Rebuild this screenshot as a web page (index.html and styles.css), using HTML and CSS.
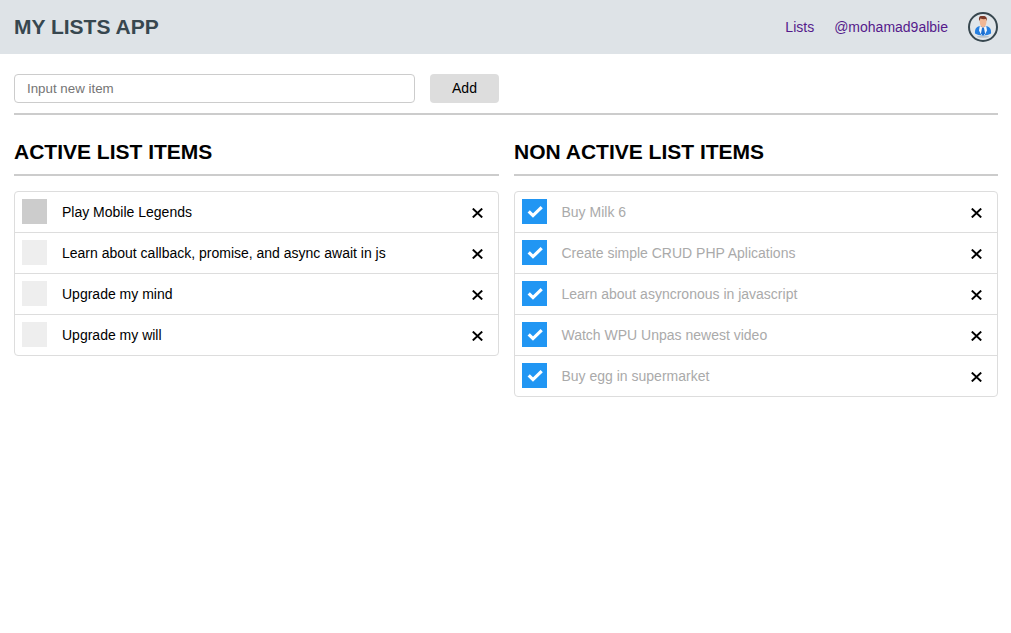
FILE: index.html
```html
<!DOCTYPE html>
<html lang="en">
<head>
<meta charset="utf-8">
<title>My Lists App</title>
<link rel="stylesheet" href="styles.css">
</head>
<body>
<svg class="symbols" width="0" height="0">
  <symbol id="cross" viewBox="0 0 11 10"><path d="M.8.600 10.200 9.400M10.200.600.8 9.400" fill="none" stroke="#000" stroke-width="2"/></symbol>
  <symbol id="check" viewBox="0 0 25 25"><path d="M6.700 12.300 11 16.600 19.700 8.100" fill="none" stroke="#fff" stroke-width="3.200"/></symbol>
</svg>
<header class="header">
  <h1 class="brand">MY LISTS APP</h1>
  <nav class="nav">
    <a class="link" href="#">Lists</a>
    <a class="link user" href="#">@mohamad9albie</a>
    <svg class="avatar" viewBox="0 0 30 30">
      <circle cx="15" cy="15" r="14" fill="#e1e6ea" stroke="#37474f" stroke-width="2"/>
      <ellipse cx="15" cy="24.800" rx="6" ry="1" fill="#b9c3cc"/>
      <path d="M7 21.500c-.3-4.500 1-6.500 4.500-7.500h7c3.500 1 4.800 3 4.500 7.500-3.500 2.600-12.500 2.600-16 0z" fill="#267fe0"/>
      <path d="M11.800 13.800 15 16l3.200-2.200.8 4.700-2.300 4.500h-3.400L11 18.500z" fill="#f4f8fc"/>
      <path d="M14 16h2l1 5.500-1.300 1.800h-1.400L13 21.500z" fill="#1c6fd0"/>
      <path d="M11.700 6.500h6.800c.4 4.500-.9 9-3.400 9s-3.800-4.500-3.400-9z" fill="#f0b795"/>
      <path d="M11.500 9C10.300 6 11.200 3.800 14 4.100c3.700-.5 5.500 1.200 4.700 4.900l-.8-2c-2 .3-4 .1-5.500-.4z" fill="#7b3a29"/>
    </svg>
  </nav>
</header>
<main class="main">
  <form class="form">
    <input class="input" type="text" placeholder="Input new item">
    <button class="add" type="button">Add</button>
  </form>
  <div class="columns">
    <section>
      <h2 class="heading">ACTIVE LIST ITEMS</h2>
      <ul class="list">
        <li class="item"><span class="box hover"></span><span class="label">Play Mobile Legends</span><svg class="cross"><use href="#cross"/></svg></li>
        <li class="item"><span class="box"></span><span class="label">Learn about callback, promise, and async await in js</span><svg class="cross"><use href="#cross"/></svg></li>
        <li class="item"><span class="box"></span><span class="label">Upgrade my mind</span><svg class="cross"><use href="#cross"/></svg></li>
        <li class="item"><span class="box"></span><span class="label">Upgrade my will</span><svg class="cross"><use href="#cross"/></svg></li>
      </ul>
    </section>
    <section>
      <h2 class="heading">NON ACTIVE LIST ITEMS</h2>
      <ul class="list done">
        <li class="item"><svg class="box"><use href="#check"/></svg><span class="label">Buy Milk 6</span><svg class="cross"><use href="#cross"/></svg></li>
        <li class="item"><svg class="box"><use href="#check"/></svg><span class="label">Create simple CRUD PHP Aplications</span><svg class="cross"><use href="#cross"/></svg></li>
        <li class="item"><svg class="box"><use href="#check"/></svg><span class="label">Learn about asyncronous in javascript</span><svg class="cross"><use href="#cross"/></svg></li>
        <li class="item"><svg class="box"><use href="#check"/></svg><span class="label">Watch WPU Unpas newest video</span><svg class="cross"><use href="#cross"/></svg></li>
        <li class="item"><svg class="box"><use href="#check"/></svg><span class="label">Buy egg in supermarket</span><svg class="cross"><use href="#cross"/></svg></li>
      </ul>
    </section>
  </div>
</main>
</body>
</html>
```
FILE: styles.css
```css
* { box-sizing: border-box; }
body {
  margin: 0;
  background: #fff;
  color: #000;
  font: 14px/20px "Liberation Sans", Arial, sans-serif;
}
.symbols { display: none; }
.header {
  display: flex;
  align-items: center;
  justify-content: space-between;
  height: 54px;
  padding: 0 13px 0 14px;
  background: #dee3e7;
}
.brand {
  margin: 0;
  color: #37474f;
  font-size: 21px;
  line-height: 24px;
}
.nav { display: flex; align-items: center; gap: 20px; }
.link { color: #551a8b; text-decoration: none; }
.avatar { width: 30px; height: 30px; }
.main { padding: 20px 13px 0 14px; }
.form {
  display: flex;
  gap: 15px;
  padding-bottom: 10px;
  border-bottom: 2px solid #ccc;
}
.input {
  width: 401px;
  height: 29px;
  padding: 0 12px;
  border: 1px solid #ccc;
  border-radius: 4px;
  font: 13.333px "Liberation Sans", Arial, sans-serif;
}
.input::placeholder { color: #757575; }
.add {
  width: 69px;
  height: 29px;
  padding: 0 0 1px;
  border: 0;
  border-radius: 4px;
  background: #ddd;
  color: #000;
  font: 14px "Liberation Sans", Arial, sans-serif;
}
.columns {
  display: grid;
  grid-template-columns: 485px 484px;
  gap: 15px;
  align-items: start;
}
.heading {
  height: 61px;
  margin: 0 0 15px;
  padding-top: 25px;
  border-bottom: 2px solid #ccc;
  font-size: 21px;
  line-height: 24px;
}
.done { color: #aaa; }
.list {
  margin: 0;
  padding: 0;
  border: 1px solid #ddd;
  border-radius: 4px;
  list-style: none;
}
.item {
  display: flex;
  align-items: center;
  height: 41px;
  padding: 0 15px 0 7px;
  border-bottom: 1px solid #ddd;
}
.item:last-child { height: 40px; border-bottom: 0; }
.box { flex: none; align-self: flex-start; width: 25px; height: 25px; margin-top: 7px; background: #eee; }
.box.hover { background: #ccc; }
.done .box { background: #2196f3; }
.label { flex: 1; padding-left: 15px; }
.done .label { padding-left: 14.500px; }
.cross { width: 11px; height: 10px; margin-top: 1px; }
```
